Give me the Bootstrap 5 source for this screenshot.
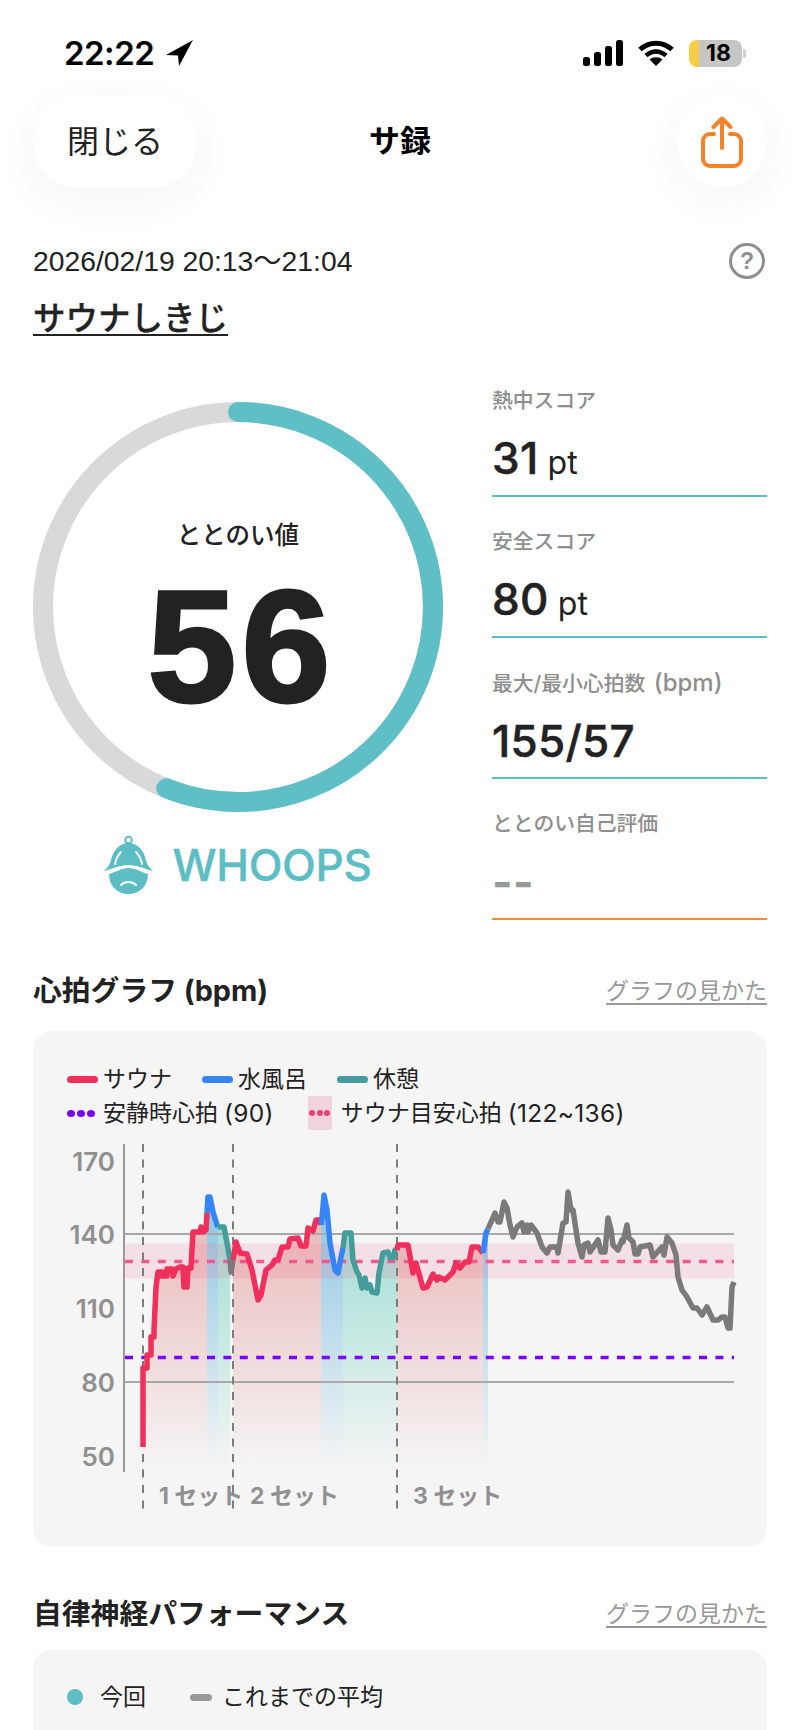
<!DOCTYPE html>
<html lang="ja">
<head>
  <meta charset="UTF-8">
  <title>サ録</title>
  <link href="https://cdn.jsdelivr.net/npm/bootstrap@5.3.3/dist/css/bootstrap.min.css" rel="stylesheet">
  <style>
    html, body { height: 1730px; overflow: hidden; }
    body {
      background: #fff;
      color: #222;
      font-family: "Liberation Sans", "Noto Sans CJK JP", sans-serif;
    }
    .page-wrap { width: 800px; padding: 0 33px; }

    .status-bar { height: 97px; position: relative; margin: 0 -33px; padding: 36px 54px 0 64px; }
    .status-time { font-family: Inter, sans-serif; font-weight: 600; font-size: 33px; line-height: 36px; color: #000; letter-spacing: -.5px; margin-top: -1px; }
    .loc-arrow { margin-left: 12px; margin-top: 4px; }
    .status-gap { margin-left: 15px; }
    .batt-pill { width: 53px; height: 27px; border-radius: 8px; background: linear-gradient(90deg, #f6cd45 0 10px, #c6c6c6 10px); font-family: Inter, sans-serif; font-weight: 700; font-size: 23px; line-height: 27px; color: #000; text-align: center; padding-left: 6px; }
    .batt-nub { width: 3px; height: 9px; background: #d0d0d0; border-radius: 0 2px 2px 0; margin-left: 1px; }

    .top-head { height: 90px; }
    .head-slot { width: 164px; }
    .btn-float { background: #fff; height: 90px; border-radius: 44px; box-shadow: 0 12px 50px rgba(0, 0, 0, .045); }
    .btn-close-pill { width: 164px; font-size: 32px; color: #222; }
    .btn-share { width: 90px; border-radius: 50%; }
    .head-title { font-size: 31px; font-weight: 700; color: #000; }

    .date-row { height: 40px; margin-top: 54px; font-size: 28.3px; }
    .help-mark { width: 36px; height: 36px; border: 3px solid #8e8e8e; border-radius: 50%; color: #8e8e8e; font-size: 23px; font-weight: 700; line-height: 30px; text-align: center; margin-right: 2px; }
    .place-name { height: 40px; margin-top: 17px; font-size: 32.5px; line-height: 42px; font-weight: 500; color: #222; text-decoration: underline; text-underline-offset: 4px; text-decoration-thickness: 2px; width: max-content; display: block; -webkit-text-stroke: .3px #222; }

    .main-row { margin-top: 48px; }
    .gauge-col { width: 410px; padding-top: 16px; }
    .gauge-box { width: 410px; height: 410px; position: relative; }
    .gauge-inner { position: absolute; inset: 0; }
    .gauge-label { font-size: 24.5px; font-weight: 500; line-height: 30px; margin-top: 119px; color: #222; }
    .gauge-num { font-size: 160px; line-height: 150px; font-weight: 700; letter-spacing: 5px; color: #222; -webkit-text-stroke: 3px #222; margin-top: 20px; padding-left: 7px; }
    .logo-row { margin-top: 23px; height: 60px; }
    .logo-word { font-family: Inter, sans-serif; font-size: 44px; font-weight: 500; color: #5dbdc4; line-height: 60px; margin-left: 18px; letter-spacing: -.3px; -webkit-text-stroke: .4px #5dbdc4; }

    .stats-col { width: 275px; margin-left: 49px; }
    .stat-item { height: 111px; border-bottom: 2px solid #5dbdc4; margin-bottom: 30px; }
    .stat-item.is-self { border-bottom-color: #f58a3c; margin-bottom: 0; }
    .stat-label { font-family: Inter, "Noto Sans CJK JP", sans-serif; font-size: 20.8px; line-height: 30px; color: #8e8e8e; font-weight: 500; }
    .stat-label .latin { font-size: 24px; margin-left: 3px; }
    .stat-value { font-family: Inter, sans-serif; height: 79px; padding-top: 7px; font-size: 44px; line-height: 70px; font-weight: 500; color: #222; letter-spacing: .3px; -webkit-text-stroke: .5px #222; }
    .stat-value .unit { font-size: 32px; font-weight: 400; margin-left: 9px; -webkit-text-stroke: 0; }
    .stat-value.is-empty { color: #999; font-weight: 700; -webkit-text-stroke: 0; padding-top: 8px; }

    .section-row { height: 40px; margin-top: 51px; }
    .section-row.second { margin-top: 48px; }
    .section-name { font-family: Inter, "Noto Sans CJK JP", sans-serif; font-size: 28.8px; line-height: 40px; font-weight: 700; color: #222; }
    .guide-link { font-size: 23px; color: #999; text-decoration: underline; text-underline-offset: 4px; }

    .graph-card { background: #f5f5f5; border-radius: 18px; margin-top: 20px; height: 515px; padding-top: 31px; }
    .graph-card.second { margin-top: 16px; height: 80px; padding-top: 30px; border-radius: 18px 18px 0 0; }
    .legend-row { height: 34px; padding-left: 34px; font-family: Inter, "Noto Sans CJK JP", sans-serif; font-size: 23px; line-height: 34px; color: #222; }
    .leg-item { width: max-content; }
    .leg-item + .leg-item { margin-left: 30px; }
    .legend-row.wide .leg-item + .leg-item { margin-left: 34px; }
    .leg-line { width: 31px; height: 7px; border-radius: 4px; margin-right: 5px; }
    .leg-dots { width: 30px; margin-right: 6px; gap: 2px; }
    .leg-dots i { width: 8px; height: 7px; border-radius: 50%; background: currentColor; }
    .leg-band { width: 24px; height: 34px; background: #f0d3dc; color: #ee3f72; margin-right: 9px; gap: 1.5px; }
    .leg-band i { width: 6px; height: 6px; border-radius: 50%; background: currentColor; flex: none; }
    .leg-num { font-size: 24.5px; margin-left: 6px; letter-spacing: .3px; }
    .graph-svg { display: block; width: 734px; height: 400px; }
    .axis-text { font-family: Inter, sans-serif; font-weight: 600; font-size: 26px; fill: #909090; }
    .set-text { font-family: Inter, "Noto Sans CJK JP", sans-serif; font-weight: 700; font-size: 23px; fill: #909090; }
    .dot-teal { width: 16px; height: 16px; background: #5dbdc4; border-radius: 50%; margin-right: 17px; }
    .dash-gray { width: 22px; height: 7px; background: #999; border-radius: 4px; margin-left: 44px; margin-right: 10px; }
  </style>
</head>
<body>
<div class="page-wrap">

  <!-- status bar -->
  <div class="status-bar d-flex justify-content-between">
    <div class="d-flex align-items-start">
      <span class="status-time">22:22</span>
      <svg width="27" height="27" viewBox="0 0 27 27" class="loc-arrow"><path d="M27 0 0 15l12 .5L13 26z" fill="#000"/></svg>
    </div>
    <div class="d-flex align-items-start">
      <svg width="40" height="26" viewBox="0 0 40 26" class="mt-1" fill="#000">
        <rect x="0" y="17" width="7" height="9" rx="2.5"/><rect x="11" y="12" width="7" height="14" rx="2.5"/><rect x="22" y="6" width="7" height="20" rx="2.5"/><rect x="33" y="0" width="7" height="26" rx="2.5"/>
      </svg>
      <svg width="36" height="26" viewBox="0 0 36 26" class="mt-1 status-gap">
        <path d="M2 9.5C11 1 25 1 34 9.5" fill="none" stroke="#000" stroke-width="5"/>
        <path d="M8 15.5c6-5.500 14-5.500 20 0" fill="none" stroke="#000" stroke-width="4.500"/>
        <path d="M18 26l-6.500-6.500c3.500-3 9.500-3 13 0z" fill="#000"/>
      </svg>
      <div class="d-flex align-items-center status-gap mt-1">
        <div class="batt-pill">18</div><div class="batt-nub"></div>
      </div>
    </div>
  </div>

  <!-- header -->
  <div class="top-head d-flex justify-content-between align-items-center">
    <div class="head-slot">
      <div class="btn-float btn-close-pill d-flex align-items-center justify-content-center">閉じる</div>
    </div>
    <div class="head-title">サ録</div>
    <div class="head-slot d-flex justify-content-end">
      <div class="btn-float btn-share d-flex align-items-center justify-content-center">
        <svg width="42" height="52" viewBox="701 117 42 52" fill="none" stroke="#f58229" stroke-width="4" stroke-linecap="round" stroke-linejoin="round">
          <path d="M714 135h-4a7 7 0 0 0-7 7v18a7 7 0 0 0 7 7h24a7 7 0 0 0 7-7v-18a7 7 0 0 0-7-7h-4"/>
          <path d="M722 149v-29M713.500 128l8.500-8.500 8.500 8.500"/>
        </svg>
      </div>
    </div>
  </div>

  <div class="date-row d-flex justify-content-between align-items-center">
    <span>2026/02/19 20:13～21:04</span>
    <span class="help-mark">?</span>
  </div>
  <a class="place-name">サウナしきじ</a>

  <!-- score block -->
  <div class="main-row d-flex">
    <div class="gauge-col">
      <div class="gauge-box">
        <svg width="410" height="410" viewBox="0 0 410 410">
          <circle cx="205" cy="205" r="195" fill="none" stroke="#d9d9d9" stroke-width="20"/>
          <circle cx="205" cy="205" r="195" fill="none" stroke="#5fbfc6" stroke-width="20" stroke-linecap="round" pathLength="100" stroke-dasharray="56 100" transform="rotate(-90 205 205)"/>
        </svg>
        <div class="gauge-inner text-center">
          <div class="gauge-label">ととのい値</div>
          <div class="gauge-num">56</div>
        </div>
      </div>
      <div class="logo-row d-flex justify-content-center">
        <svg width="50" height="60" viewBox="105 835 50 60">
          <circle cx="129.500" cy="840" r="3.300" fill="none" stroke="#5dbdc4" stroke-width="2"/>
          <path d="M105 871c4-4 6-6 7-11 2-9 8-17 17.500-17s15.500 8 17.500 17c1 5 3 7 7 11-8-2-16-6-24.500-6s-16.500 4-24.500 6z" fill="#5dbdc4"/>
          <path d="M116 864c1-5 3-9 6-12M143 864c-1-5-3-9-6-12" fill="none" stroke="#fff" stroke-width="1.800" stroke-linecap="round"/>
          <path d="M110 874c7-2 13-6 19.500-6s12.500 4 19.500 6c0 12-8 20-19.500 20S110 886 110 874z" fill="#5dbdc4"/>
          <path d="M122 885c4-4 11-4 15 0" fill="none" stroke="#fff" stroke-width="2" stroke-linecap="round"/>
        </svg>
        <span class="logo-word">WHOOPS</span>
      </div>
    </div>
    <div class="stats-col">
      <div class="stat-item">
        <div class="stat-label">熱中スコア</div>
        <div class="stat-value">31<span class="unit">pt</span></div>
      </div>
      <div class="stat-item">
        <div class="stat-label">安全スコア</div>
        <div class="stat-value">80<span class="unit">pt</span></div>
      </div>
      <div class="stat-item">
        <div class="stat-label">最大/最小心拍数 <span class="latin">(bpm)</span></div>
        <div class="stat-value">155/57</div>
      </div>
      <div class="stat-item is-self">
        <div class="stat-label">ととのい自己評価</div>
        <div class="stat-value is-empty">--</div>
      </div>
    </div>
  </div>

  <!-- heart rate graph -->
  <div class="section-row d-flex justify-content-between align-items-center">
    <div class="section-name">心拍グラフ (bpm)</div>
    <a class="guide-link">グラフの見かた</a>
  </div>
  <div class="graph-card">
    <div class="legend-row d-flex align-items-center">
      <div class="leg-item d-flex align-items-center"><span class="leg-line" style="background:#f0305a"></span>サウナ</div>
      <div class="leg-item d-flex align-items-center"><span class="leg-line" style="background:#3585f5"></span>水風呂</div>
      <div class="leg-item d-flex align-items-center"><span class="leg-line" style="background:#459c9c"></span>休憩</div>
    </div>
    <div class="legend-row wide d-flex align-items-center">
      <div class="leg-item d-flex align-items-center"><span class="leg-dots d-flex" style="color:#7a00ff"><i></i><i></i><i></i></span>安静時心拍<span class="leg-num">(90)</span></div>
      <div class="leg-item d-flex align-items-center"><span class="leg-band d-flex align-items-center justify-content-center"><i></i><i></i><i></i></span>サウナ目安心拍<span class="leg-num">(122~136)</span></div>
    </div>
    <svg id="hrChart" class="graph-svg" viewBox="33 1130 734 400">
      <defs>
        <linearGradient id="fillRed" gradientUnits="userSpaceOnUse" x1="0" y1="1230" x2="0" y2="1470"><stop offset="0" stop-color="#d85a5a" stop-opacity=".36"/><stop offset="1" stop-color="#d85a5a" stop-opacity="0"/></linearGradient>
        <linearGradient id="fillBlue" gradientUnits="userSpaceOnUse" x1="0" y1="1230" x2="0" y2="1470"><stop offset="0" stop-color="#4aa8d8" stop-opacity=".55"/><stop offset="1" stop-color="#4aa8d8" stop-opacity="0"/></linearGradient>
        <linearGradient id="fillTeal" gradientUnits="userSpaceOnUse" x1="0" y1="1230" x2="0" y2="1470"><stop offset="0" stop-color="#4fc8b4" stop-opacity=".5"/><stop offset="1" stop-color="#4fc8b4" stop-opacity="0"/></linearGradient>
      </defs>
      <g id="areaLayer"></g>
      <rect x="124" y="1243.500" width="610" height="35" fill="#e8648c" fill-opacity=".15"/>
      <g fill="none" stroke-width="2">
        <path d="M125 1234H734M125 1382H734" stroke="#a8a8a8"/>
        <path d="M124 1144V1472" stroke="#999"/>
        <path d="M143 1144V1513M233 1144V1513M397 1144V1513" stroke="#7c7c7c" stroke-dasharray="8 7.500"/>
      </g>
      <path d="M125 1261.500H734" stroke="#ee5a8f" stroke-width="3.500" stroke-dasharray="8 8.400"/>
      <path d="M125 1357.500H734" stroke="#7a00ff" stroke-width="3.500" stroke-dasharray="8 8.400"/>
      <g id="lineLayer" fill="none" stroke-width="5.500" stroke-linejoin="round"></g>
      <g class="axis-text" text-anchor="end">
        <text x="115" y="1171">170</text>
        <text x="115" y="1244">140</text>
        <text x="115" y="1318">110</text>
        <text x="115" y="1392">80</text>
        <text x="115" y="1466">50</text>
      </g>
      <g class="set-text">
        <text x="159" y="1504">1 セット</text>
        <text x="250" y="1504">2 セット</text>
        <text x="413" y="1504">3 セット</text>
      </g>
    </svg>
  </div>

  <!-- autonomic nerve -->
  <div class="section-row second d-flex justify-content-between align-items-center">
    <div class="section-name">自律神経パフォーマンス</div>
    <a class="guide-link">グラフの見かた</a>
  </div>
  <div class="graph-card second">
    <div class="legend-row d-flex align-items-center">
      <span class="dot-teal"></span>今回<span class="dash-gray"></span>これまでの平均
    </div>
  </div>
</div>

<script src="https://cdn.jsdelivr.net/npm/bootstrap@5.3.3/dist/js/bootstrap.bundle.min.js"></script>
<script>
  // heart rate trace, page coordinates read off the graph
  const RED = "#f0305a", BLUE = "#3585f5", TEAL = "#459c9c", GRAY = "#7a7a7a";
  const segments = [
    [RED, "fillRed", "143,1447 143,1368 147,1368 147,1355 151,1355 151,1337 154,1337 154,1330 156,1287 158,1272 162,1272 162,1276 167,1276 167,1269 172,1269 173,1276 176,1269 180,1267 183,1267 184,1287 187,1287 188,1268 191,1268 193,1232 200,1232 201,1227 203,1232 206,1230 207,1213"],
    [BLUE, "fillBlue", "207,1213 208,1197 210,1197 213,1212 217,1225 218,1227"],
    [TEAL, "fillTeal", "218,1227 220,1227 224,1227 227,1243 230,1260"],
    [GRAY, null, "230,1260 231,1272 233,1260"],
    [RED, "fillRed", "233,1260 236,1242 240,1253 247,1254 252,1270 258,1300 261,1295 266,1270 272,1265 275,1260 278,1260 282,1247 288,1247 290,1239 298,1238 301,1246 306,1246 308,1228 313,1231 316,1220 320,1220 321,1225"],
    [BLUE, "fillBlue", "321,1225 322,1218 324,1195 327,1210 330,1243 335,1270 338,1273 341,1257 343,1248"],
    [TEAL, "fillTeal", "343,1248 345,1233 351,1233 353,1260 357,1272 359,1275 362,1288 365,1278 367,1288 370,1285 372,1292 377,1293 379,1273 383,1253 388,1252 390,1258 393,1258 395,1250 397,1250"],
    [RED, "fillRed", "397,1250 398,1245 408,1245 413,1273 416,1263 423,1288 427,1287 433,1274 437,1280 439,1277 445,1280 453,1272 456,1263 460,1268 465,1262 469,1262 472,1247 478,1247 483,1253"],
    [BLUE, "fillBlue", "483,1253 486,1233 488,1229"],
    [GRAY, null, "488,1229 495,1213 498,1222 500,1222 504,1202 507,1208 510,1225 513,1237 517,1227 522,1223 524,1232 527,1225 528,1232 531,1225 537,1233 542,1247 547,1253 550,1247 557,1247 558,1253 563,1223 566,1222 568,1192 571,1210 573,1210 578,1243 582,1257 584,1245 588,1243 590,1252 598,1240 601,1252 605,1252 608,1218 611,1230 613,1245 618,1250 622,1240 623,1242 627,1225 629,1238 633,1242 635,1254 638,1254 640,1247 650,1245 653,1257 662,1247 664,1255 667,1237 672,1243 676,1255 678,1277 682,1290 687,1297 693,1308 697,1308 702,1315 707,1307 713,1320 718,1320 722,1317 725,1317 728,1328 730,1328 732,1287 734,1282"]
  ];
  const NS = "http://www.w3.org/2000/svg";
  const areaLayer = document.getElementById("areaLayer");
  const lineLayer = document.getElementById("lineLayer");
  segments.forEach(([color, fill, pts]) => {
    if (fill) {
      const first = pts.split(" ")[0].split(",")[0];
      const last = pts.split(" ").pop().split(",")[0];
      const area = document.createElementNS(NS, "polygon");
      area.setAttribute("points", `${first},1470 ${pts} ${last},1470`);
      area.setAttribute("fill", `url(#${fill})`);
      areaLayer.appendChild(area);
    }
    const line = document.createElementNS(NS, "polyline");
    line.setAttribute("points", pts);
    line.setAttribute("stroke", color);
    lineLayer.appendChild(line);
  });
</script>
</body>
</html>
